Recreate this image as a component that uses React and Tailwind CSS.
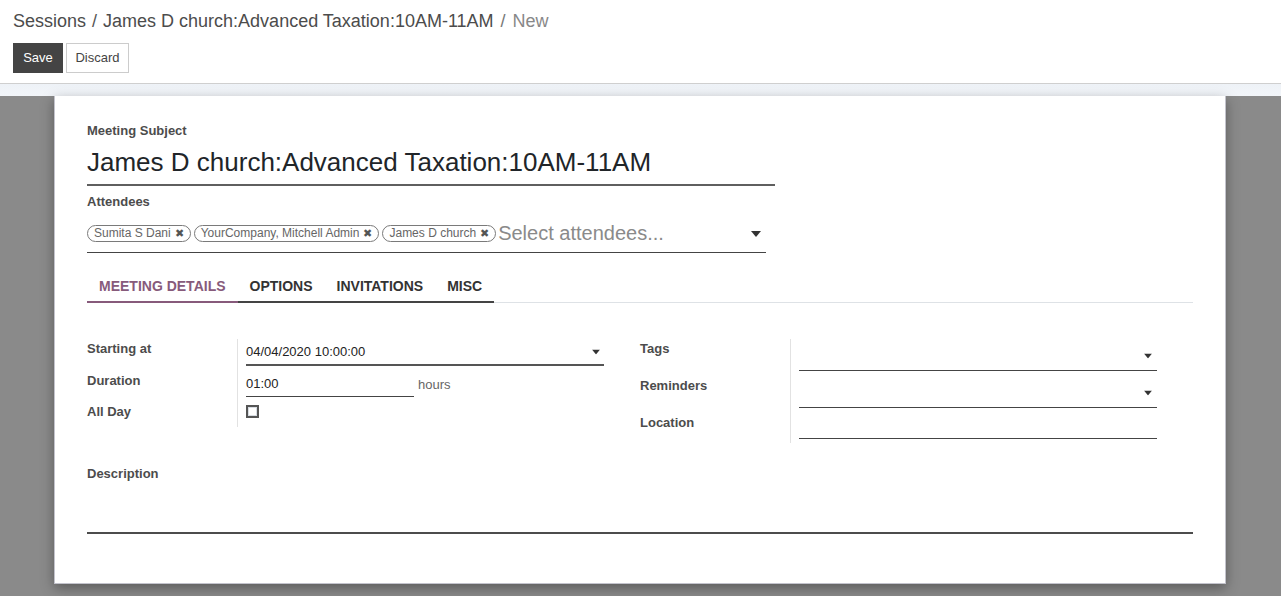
import React from "react";

const Caret = ({ className = "" }) => (
  <svg className={className} width="10" height="6" viewBox="0 0 10 6">
    <path d="M0 0 L10 0 L5 6 Z" fill="#333" />
  </svg>
);

const Tag = ({ children }) => (
  <span className="inline-flex items-center h-[17px] px-[6px] rounded-full border border-[#7a7a7a] text-[12px] leading-[15px] text-[#666] whitespace-nowrap">
    {children}
    <span className="ml-[4px] text-[11px] text-[#555]">✖</span>
  </span>
);

export default function App() {
  return (
    <div className="w-[1281px] h-[596px] overflow-hidden bg-[#8a8a8a] text-[#4c4c4c]" style={{ fontFamily: "'Liberation Sans', Arial, sans-serif" }}>
      {/* Control panel */}
      <div className="bg-white h-[84px] border-b border-[#cfcfcf] px-[13px] pt-[10px]">
        <div className="text-[18px] leading-[22px] text-[#4c4c4c] whitespace-nowrap">
          <span>Sessions</span>
          <span className="mx-[6px] text-[#555]">/</span>
          <span>James D church:Advanced Taxation:10AM-11AM</span>
          <span className="mx-[7px] text-[#777]">/</span>
          <span className="text-[#888]">New</span>
        </div>
        <div className="flex gap-[3px] mt-[11px]">
          <button className="h-[30px] w-[50px] bg-[#444] text-white text-[13px]">Save</button>
          <button className="h-[30px] w-[63px] bg-white border border-[#cccccc] text-[#444] text-[13px]">Discard</button>
        </div>
      </div>
      <div className="h-[12px] bg-gradient-to-b from-[#eef2f7] to-[#f2f5f9]" />
      {/* Sheet */}
      <div className="ml-[54px] w-[1172px] h-[488px] bg-white border-x border-b border-[#c3c3cc] shadow-[0_4px_12px_rgba(0,0,0,0.35)] px-[32px] pt-[26px]">
        <div className="text-[13px] font-bold leading-[18px]">Meeting Subject</div>
        <div className="w-[688px] h-[46px] border-b-2 border-[#5f5f5f] text-[26px] leading-[44px] text-[#212529]">
          James D church:Advanced Taxation:10AM-11AM
        </div>
        <div className="mt-[7px] text-[13px] font-bold leading-[18px]">Attendees</div>
        <div className="w-[679px] h-[42px] border-b border-[#444] pt-[3px] flex items-center">
          <div className="flex items-center gap-[3px]">
            <Tag>Sumita S Dani</Tag>
            <Tag>YourCompany, Mitchell Admin</Tag>
            <Tag>James D church</Tag>
          </div>
          <span className="text-[20px] text-[#8a8a8a] ml-[2px] whitespace-nowrap">Select attendees...</span>
          <Caret className="ml-auto mr-[5px] mt-[1px]" />
        </div>

        {/* Tabs */}
        <div className="mt-[17px] flex border-b border-[#dee2e6]">
          <div className="px-[12px] pt-[6px] pb-[5px] leading-[20px] text-[14px] font-bold text-[#875a7b] border-b-2 border-[#875a7b] -mb-px">MEETING DETAILS</div>
          <div className="px-[12px] pt-[6px] pb-[5px] leading-[20px] text-[14px] font-bold text-[#333] border-b-2 border-[#444] -mb-px">OPTIONS</div>
          <div className="px-[12px] pt-[6px] pb-[5px] leading-[20px] text-[14px] font-bold text-[#333] border-b-2 border-[#444] -mb-px">INVITATIONS</div>
          <div className="px-[12px] pt-[6px] pb-[5px] leading-[20px] text-[14px] font-bold text-[#333] border-b-2 border-[#444] -mb-px">MISC</div>
        </div>

        {/* Groups */}
        <div className="mt-[36px] flex">
          <div className="w-[553px] flex">
            <div className="w-[150px] text-[13px] font-bold pt-[1px]">
              <div className="h-[32px] leading-[18px]">Starting at</div>
              <div className="h-[31px] leading-[18px]">Duration</div>
              <div className="h-[24px] leading-[18px]">All Day</div>
            </div>
            <div className="border-l border-[#e2e2e2] pl-[8px] h-[88px] text-[13px]">
              <div className="h-[31px]">
                <div className="w-[358px] h-[27px] border-b-2 border-[#555] flex items-center pt-[1px]">
                  <span className="text-[#222]">04/04/2020 10:00:00</span>
                  <Caret className="ml-auto mr-[3px] scale-[0.8]" />
                </div>
              </div>
              <div className="h-[31px] flex items-start">
                <div className="w-[168px] h-[27px] border-b border-[#444] flex items-center pt-[1px] text-[#222]">01:00</div>
                <span className="ml-[4px] mt-[5px] text-[#666]">hours</span>
              </div>
              <div className="h-[26px] pt-[4px]">
                <div className="w-[13px] h-[13px] border-2 border-[#555] bg-white shadow-[inset_0_0_0_1px_#d8dde3]" />
              </div>
            </div>
          </div>
          <div className="w-[553px] flex">
            <div className="w-[150px] text-[13px] font-bold pt-[1px]">
              <div className="h-[37px] leading-[18px]">Tags</div>
              <div className="h-[37px] leading-[18px]">Reminders</div>
              <div className="h-[29px] leading-[18px]">Location</div>
            </div>
            <div className="border-l border-[#e2e2e2] pl-[8px] h-[104px]">
              <div className="h-[37px]">
                <div className="w-[358px] h-[32px] border-b border-[#444] flex items-center pt-[2px]">
                  <Caret className="ml-auto mr-[4px] scale-[0.8]" />
                </div>
              </div>
              <div className="h-[37px]">
                <div className="w-[358px] h-[32px] border-b border-[#444] flex items-center pt-[2px]">
                  <Caret className="ml-auto mr-[4px] scale-[0.8]" />
                </div>
              </div>
              <div className="w-[358px] h-[26px] border-b border-[#444]" />
            </div>
          </div>
        </div>

        <div className="mt-[22px] text-[13px] font-bold leading-[18px]">Description</div>
        <div className="h-[51px] border-b-2 border-[#4c4c4c]" />
      </div>
    </div>
  );
}
